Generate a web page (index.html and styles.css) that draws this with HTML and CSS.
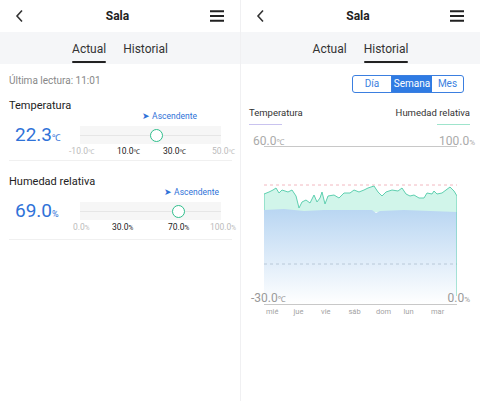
FILE: index.html
```html
<!DOCTYPE html>
<html lang="es">
<head>
<meta charset="utf-8">
<link rel="stylesheet" href="styles.css">
</head>
<body>
<div class="screens">
  <section class="panel">
    <header class="topbar">
      <svg class="back" width="10" height="14" viewBox="0 0 10 14"><path d="M7 1.5 L2 7 L7 12.5" fill="none" stroke="#333" stroke-width="1.6"/></svg>
      <h1 class="title">Sala</h1>
      <svg class="menu" width="14" height="12" viewBox="0 0 14 12"><path d="M0 1.2H14M0 6H14M0 10.8H14" stroke="#222" stroke-width="2"/></svg>
    </header>
    <nav class="tabs">
      <span class="tab active">Actual</span>
      <span class="tab">Historial</span>
    </nav>
    <div class="current">
      <p class="last">Última lectura: 11:01</p>
      <div class="metric m-temp">
        <h2 class="mname">Temperatura</h2>
        <div class="trend trend-t">➤ Ascendente</div>
        <div class="mrow">
          <div class="value">22.3<small>℃</small></div>
          <div class="gauge">
            <div class="track"><span class="knob" style="left:54%"></span></div>
            <div class="ticks t-temp">
              <span class="dim">-10.0<small>℃</small></span>
              <span>10.0<small>℃</small></span>
              <span>30.0<small>℃</small></span>
              <span class="dim">50.0<small>℃</small></span>
            </div>
          </div>
        </div>
      </div>
      <div class="metric m-hum">
        <h2 class="mname">Humedad relativa</h2>
        <div class="trend trend-h">➤ Ascendente</div>
        <div class="mrow">
          <div class="value">69.0<small>%</small></div>
          <div class="gauge">
            <div class="track"><span class="knob" style="left:70%"></span></div>
            <div class="ticks t-hum">
              <span class="dim">0.0<small>%</small></span>
              <span>30.0<small>%</small></span>
              <span>70.0<small>%</small></span>
              <span class="dim">100.0<small>%</small></span>
            </div>
          </div>
        </div>
      </div>
    </div>
  </section>
  <section class="panel right">
    <header class="topbar">
      <svg class="back" width="10" height="14" viewBox="0 0 10 14"><path d="M7 1.5 L2 7 L7 12.5" fill="none" stroke="#333" stroke-width="1.6"/></svg>
      <h1 class="title">Sala</h1>
      <svg class="menu" width="14" height="12" viewBox="0 0 14 12"><path d="M0 1.2H14M0 6H14M0 10.8H14" stroke="#222" stroke-width="2"/></svg>
    </header>
    <nav class="tabs">
      <span class="tab">Actual</span>
      <span class="tab active">Historial</span>
    </nav>
    <div class="history">
      <div class="seg">
        <span class="segbtn">Día</span>
        <span class="segbtn on">Semana</span>
        <span class="segbtn">Mes</span>
      </div>
      <div class="legend">
        <span class="lg lg-t">Temperatura</span>
        <span class="lg lg-h">Humedad relativa</span>
      </div>
      <div class="chart">
        <span class="ax ax-tl">60.0<small>℃</small></span>
        <span class="ax ax-tr">100.0<small>%</small></span>
        <span class="ax ax-bl">-30.0<small>℃</small></span>
        <span class="ax ax-br">0.0<small>%</small></span>
        <svg class="plot" width="193" height="159" viewBox="0 0 193 159">
          <defs>
            <linearGradient id="bg" x1="0" y1="0" x2="0" y2="1">
              <stop offset="0" stop-color="#b9d6f2"/>
              <stop offset="1" stop-color="#ffffff"/>
            </linearGradient>
          </defs>
          <line x1="0" y1="0.5" x2="193" y2="0.5" stroke="#c8c8c8" stroke-width="1"/>
          <path d="M0 48 L5 46 L9 44 L12 42 L15 47 L18 44 L24 46 L28 44 L32 50 L35 62 L38 56 L42 54 L46 57 L50 49 L53 56 L56 52 L58 46 L61 58 L64 50 L70 49 L75 52 L80 47 L86 47 L90 44 L95 46 L100 44 L104 42 L110 40 L114 46 L118 50 L122 46 L128 44 L134 45 L138 42 L142 48 L146 50 L150 49 L155 52 L160 52 L163 47 L168 48 L170 45 L173 48 L178 47 L182 44 L186 41 L190 45 L193 50 L193 66 L0 66 Z" fill="#d1f5ea"/>
          <path d="M0 64 L20 63 L40 65 L60 64 L90 64 L108 64 L112 67 L116 65 L140 64 L193 66 L193 158 L0 158 Z" fill="url(#bg)"/>
          <line x1="0" y1="39" x2="193" y2="39" stroke="#f2b8c0" stroke-dasharray="3 3"/>
          <line x1="0" y1="118" x2="193" y2="118" stroke="#b8c8d8" stroke-dasharray="3 3"/>
          <path d="M0 64 L0 48 L5 46 L9 44 L12 42 L15 47 L18 44 L24 46 L28 44 L32 50 L35 62 L38 56 L42 54 L46 57 L50 49 L53 56 L56 52 L58 46 L61 58 L64 50 L70 49 L75 52 L80 47 L86 47 L90 44 L95 46 L100 44 L104 42 L110 40 L114 46 L118 50 L122 46 L128 44 L134 45 L138 42 L142 48 L146 50 L150 49 L155 52 L160 52 L163 47 L168 48 L170 45 L173 48 L178 47 L182 44 L186 41 L190 45 L193 50 L193 150" fill="none" stroke="#5fd0b0" stroke-width="1"/>
          <line x1="0" y1="158.5" x2="193" y2="158.5" stroke="#c8c8c8" stroke-width="1"/>
        </svg>
        <div class="days">
          <span>mié</span><span>jue</span><span>vie</span><span>sáb</span><span>dom</span><span>lun</span><span>mar</span>
        </div>
      </div>
    </div>
  </section>
</div>
</body>
</html>
```
FILE: styles.css
```css
* { box-sizing: border-box; }
html, body { margin: 0; padding: 0; background: #fff; }
body { font-family: Roboto, "Noto Sans", "Liberation Sans", sans-serif; color: #222; width: 480px; height: 401px; overflow: hidden; }
.screens { display: flex; }
.panel { width: 240px; height: 401px; }
.panel.right { border-left: 1px solid #f0f0f2; }

.topbar { height: 32px; display: flex; align-items: center; justify-content: space-between; padding: 0 16px 0 15px; }
.title { margin: 0; font-size: 12px; font-weight: 700; color: #222; }
.back, .menu { display: block; }

.tabs { height: 32px; background: #f5f6f8; display: flex; justify-content: center; align-items: center; gap: 17px; }
.tab { font-size: 12px; color: #333; position: relative; line-height: 16px; padding-top: 1px; }
.tab.active::after { content: ""; position: absolute; left: 0; right: 0; bottom: -6px; height: 2px; background: #222; border-radius: 1px; }

.current { padding: 10px 8px 0 9px; }
.last { margin: 0; font-size: 10px; color: #888; line-height: 13px; }
.metric { border-bottom: 1px solid #f0f0f0; }
.m-temp { padding-top: 11px; padding-bottom: 0; }
.m-hum { padding-top: 13px; padding-bottom: 3px; }
.mname { margin: 0; font-size: 11px; font-weight: 400; color: #222; line-height: 15px; }
.trend { font-size: 8.5px; color: #2f72d8; line-height: 11px; margin-top: -2px; }
.trend-t { padding-left: 133px; }
.trend-h { padding-left: 155px; }
.mrow { display: flex; align-items: flex-start; }
.value { width: 71px; padding-left: 6px; font-size: 19px; color: #2f72d8; line-height: 24px; padding-top: 1px; }
.value small { font-size: 9px; }
.gauge { width: 141px; padding-top: 4px; }
.track { height: 18px; background: #f6f6f6; position: relative; }
.track::before { content: ""; position: absolute; left: 0; right: 0; top: 9px; height: 1px; background: #e6e6e6; }
.knob { position: absolute; top: 3px; width: 13px; height: 13px; margin-left: -6.5px; border: 1.6px solid #2fbe8c; border-radius: 50%; background: #fff; }
.ticks { position: relative; height: 16px; font-size: 8.5px; color: #222; }
.ticks span { position: absolute; top: 2px; white-space: nowrap; }
.ticks small { font-size: 6.5px; }
.ticks .dim { color: #bbb; }
.t-temp span:nth-child(1) { left: -11px; }
.t-temp span:nth-child(2) { left: 37px; }
.t-temp span:nth-child(3) { left: 83px; }
.t-temp span:nth-child(4) { left: 132px; }
.t-hum span:nth-child(1) { left: -7px; }
.t-hum span:nth-child(2) { left: 32px; }
.t-hum span:nth-child(3) { left: 88px; }
.t-hum span:nth-child(4) { left: 130px; }

.history { padding: 11px 0 0 0; }
.seg { display: flex; width: 112px; margin-left: 111px; border: 1px solid #3b7fe0; border-radius: 3px; overflow: hidden; height: 18px; }
.segbtn { font-size: 10px; color: #3b7fe0; display: flex; align-items: center; justify-content: center; line-height: 16px; }
.segbtn:nth-child(1) { width: 39px; border-right: 1px solid #3b7fe0; }
.segbtn:nth-child(2) { width: 40px; }
.segbtn:nth-child(3) { flex: 1; }
.segbtn.on { background: #2f7be3; color: #fff; }

.legend { display: flex; justify-content: space-between; padding: 13px 10px 0 8px; font-size: 9.5px; color: #333; }
.lg { position: relative; line-height: 14px; }
.lg::after { content: ""; position: absolute; bottom: -5px; height: 1px; width: 33px; }
.lg-t::after { left: 0; background: #c9c3ef; }
.lg-h::after { right: 0; background: #9fe4cc; }

.chart { position: relative; padding: 26px 0 0 23px; }
.ax { position: absolute; font-size: 12px; color: #aaa; line-height: 14px; }
.ax small { font-size: 8px; }
.ax-tl { left: 12px; top: 14px; }
.ax-tr { right: 5px; top: 14px; }
.ax-bl { left: 10px; top: 171px; color: #999; }
.ax-br { right: 10px; top: 171px; color: #999; }
.plot { display: block; }
.days { display: flex; font-size: 7.5px; color: #a3a3a3; margin-top: 2px; }
.days span { width: 27.5px; padding-left: 2px; }
```
